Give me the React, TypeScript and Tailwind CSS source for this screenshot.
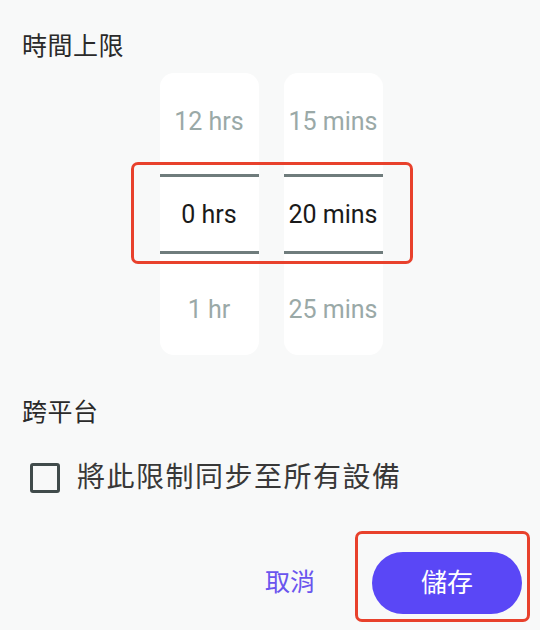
import React from "react";

const font = { fontFamily: 'Roboto, "Noto Sans CJK TC", sans-serif' };

type Col = { top: string; mid: string; bottom: string };

const cols: Col[] = [
  { top: "12 hrs", mid: "0 hrs", bottom: "1 hr" },
  { top: "15 mins", mid: "20 mins", bottom: "25 mins" },
];

function Column({ col }: { col: Col }) {
  return (
    <div className="flex w-[99px] flex-col rounded-[14px] bg-white">
      <div className="flex h-[94px] items-center justify-center pt-[4px] text-[25px] text-[#9aa9a7]">
        {col.top}
      </div>
      <div className="flex h-[94px] flex-col justify-between py-[7px]">
        <div className="h-[3px] bg-[#6f7c7c]" />
        <div className="flex items-center justify-center pt-[2px] text-[25px] text-[#1a1a1a]">
          {col.mid}
        </div>
        <div className="h-[3px] bg-[#6f7c7c]" />
      </div>
      <div className="flex h-[94px] items-center justify-center pt-[4px] text-[25px] text-[#9aa9a7]">
        {col.bottom}
      </div>
    </div>
  );
}

export default function App() {
  return (
    <div className="flex h-[630px] w-[540px] flex-col bg-[#f8f9f9]" style={font}>
      <div className="mt-[33px] h-[28px] pl-[22px] text-[25px] leading-[28px] tracking-[0.5px] text-[#2a2a2a]">
        時間上限
      </div>

      {/* picker */}
      <div className="mt-[12px] flex justify-center pl-[2px]">
        <div className="relative flex gap-[25px]">
          {cols.map((c) => (
            <Column key={c.top} col={c} />
          ))}
          <div className="pointer-events-none absolute left-[-29px] right-[-30px] top-[89px] h-[102px] rounded-[7px] border-[3px] border-[#e8412c]" />
        </div>
      </div>

      <div className="mt-[44px] h-[28px] pl-[22px] text-[25px] leading-[28px] tracking-[0.5px] text-[#2a2a2a]">
        跨平台
      </div>

      <label className="mt-[33px] flex h-[36px] items-center pl-[30px]">
        <span className="h-[30px] w-[30px] rounded-[3px] border-[3px] border-[#404b4b]" />
        <span className="ml-[17px] text-[28px] tracking-[1.5px] text-[#383838]">
          將此限制同步至所有設備
        </span>
      </label>

      <div className="mt-[56px] flex items-center justify-end pr-[18px]">
        <button className="mr-[57px] text-[25px] text-[#6a55ee]">取消</button>
        <div className="relative">
          <button className="h-[62px] w-[150px] rounded-full bg-[#5a47f6] text-[26px] text-white">
            儲存
          </button>
          <div className="pointer-events-none absolute bottom-[-8px] left-[-17px] right-[-8px] top-[-21px] rounded-[7px] border-[3px] border-[#e8412c]" />
        </div>
      </div>
    </div>
  );
}
